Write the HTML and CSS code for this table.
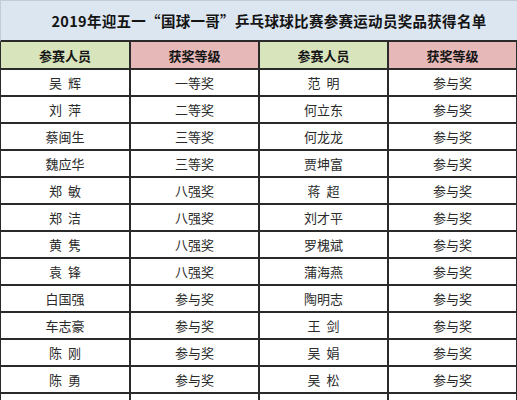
FILE: index.html
```html
<!DOCTYPE html>
<html lang="zh-CN">
<head>
<meta charset="utf-8">
<title>2019年迎五一“国球一哥”乒乓球球比赛参赛运动员奖品获得名单</title>
<link rel="stylesheet" href="styles.css">
</head>
<body>
<div class="sheet">
  <div class="title">2019年迎五一“国球一哥”乒乓球球比赛参赛运动员奖品获得名单</div>
  <div class="row head">
    <div class="cell c1 green">参赛人员</div>
    <div class="cell c2 pink">获奖等级</div>
    <div class="cell c3 green">参赛人员</div>
    <div class="cell c4 pink">获奖等级</div>
  </div>
  <div class="row"><div class="cell c1">吴&nbsp;&nbsp;辉</div><div class="cell c2">一等奖</div><div class="cell c3">范&nbsp;&nbsp;明</div><div class="cell c4">参与奖</div></div>
  <div class="row"><div class="cell c1">刘&nbsp;&nbsp;萍</div><div class="cell c2">二等奖</div><div class="cell c3">何立东</div><div class="cell c4">参与奖</div></div>
  <div class="row"><div class="cell c1">蔡闽生</div><div class="cell c2">三等奖</div><div class="cell c3">何龙龙</div><div class="cell c4">参与奖</div></div>
  <div class="row"><div class="cell c1">魏应华</div><div class="cell c2">三等奖</div><div class="cell c3">贾坤富</div><div class="cell c4">参与奖</div></div>
  <div class="row"><div class="cell c1">郑&nbsp;&nbsp;敏</div><div class="cell c2">八强奖</div><div class="cell c3">蒋&nbsp;&nbsp;超</div><div class="cell c4">参与奖</div></div>
  <div class="row"><div class="cell c1">郑&nbsp;&nbsp;洁</div><div class="cell c2">八强奖</div><div class="cell c3">刘才平</div><div class="cell c4">参与奖</div></div>
  <div class="row"><div class="cell c1">黄&nbsp;&nbsp;隽</div><div class="cell c2">八强奖</div><div class="cell c3">罗槐斌</div><div class="cell c4">参与奖</div></div>
  <div class="row"><div class="cell c1">袁&nbsp;&nbsp;锋</div><div class="cell c2">八强奖</div><div class="cell c3">蒲海燕</div><div class="cell c4">参与奖</div></div>
  <div class="row"><div class="cell c1">白国强</div><div class="cell c2">参与奖</div><div class="cell c3">陶明志</div><div class="cell c4">参与奖</div></div>
  <div class="row"><div class="cell c1">车志豪</div><div class="cell c2">参与奖</div><div class="cell c3">王&nbsp;&nbsp;剑</div><div class="cell c4">参与奖</div></div>
  <div class="row"><div class="cell c1">陈&nbsp;&nbsp;刚</div><div class="cell c2">参与奖</div><div class="cell c3">吴&nbsp;&nbsp;娟</div><div class="cell c4">参与奖</div></div>
  <div class="row"><div class="cell c1">陈&nbsp;&nbsp;勇</div><div class="cell c2">参与奖</div><div class="cell c3">吴&nbsp;&nbsp;松</div><div class="cell c4">参与奖</div></div>
  <div class="row"><div class="cell c1">陈&nbsp;&nbsp;燕</div><div class="cell c2">参与奖</div><div class="cell c3">王海军</div><div class="cell c4">参与奖</div></div>
</div>
</body>
</html>
```
FILE: styles.css
```css
html, body {
  margin: 0;
  padding: 0;
  background: #ffffff;
}
body {
  font-family: "Noto Sans CJK SC", "Noto Sans", sans-serif;
  overflow: hidden;
  height: 400px;
}
.sheet {
  width: 517px;
}
.title {
  box-sizing: border-box;
  height: 42px;
  background: #dce6f1;
  border-top: 1px solid #c3ccd6;
  border-left: 1px solid #c3ccd6;
  border-bottom: 2px solid #2a2a2a;
  display: flex;
  align-items: center;
  justify-content: center;
  padding-left: 20px;
  padding-bottom: 1px;
  font-size: 14.5px;
  font-weight: 700;
  color: #141414;
  letter-spacing: 0.3px;
}
.row {
  display: grid;
  grid-template-columns: 130px 129px 129px 129px;
  height: 27px;
  border-left: 1px solid #2a2a2a;
}
.row.head {
  height: 28px;
}
.cell {
  box-sizing: border-box;
  border-right: 2px solid #2a2a2a;
  border-bottom: 2px solid #2a2a2a;
  display: flex;
  align-items: center;
  justify-content: center;
  font-size: 13px;
  color: #2b2b2b;
  white-space: pre;
}
.head .cell {
  font-weight: 700;
  color: #151515;
}
.green {
  background: #d8e4bc;
}
.pink {
  background: #e6b8b7;
}
```
